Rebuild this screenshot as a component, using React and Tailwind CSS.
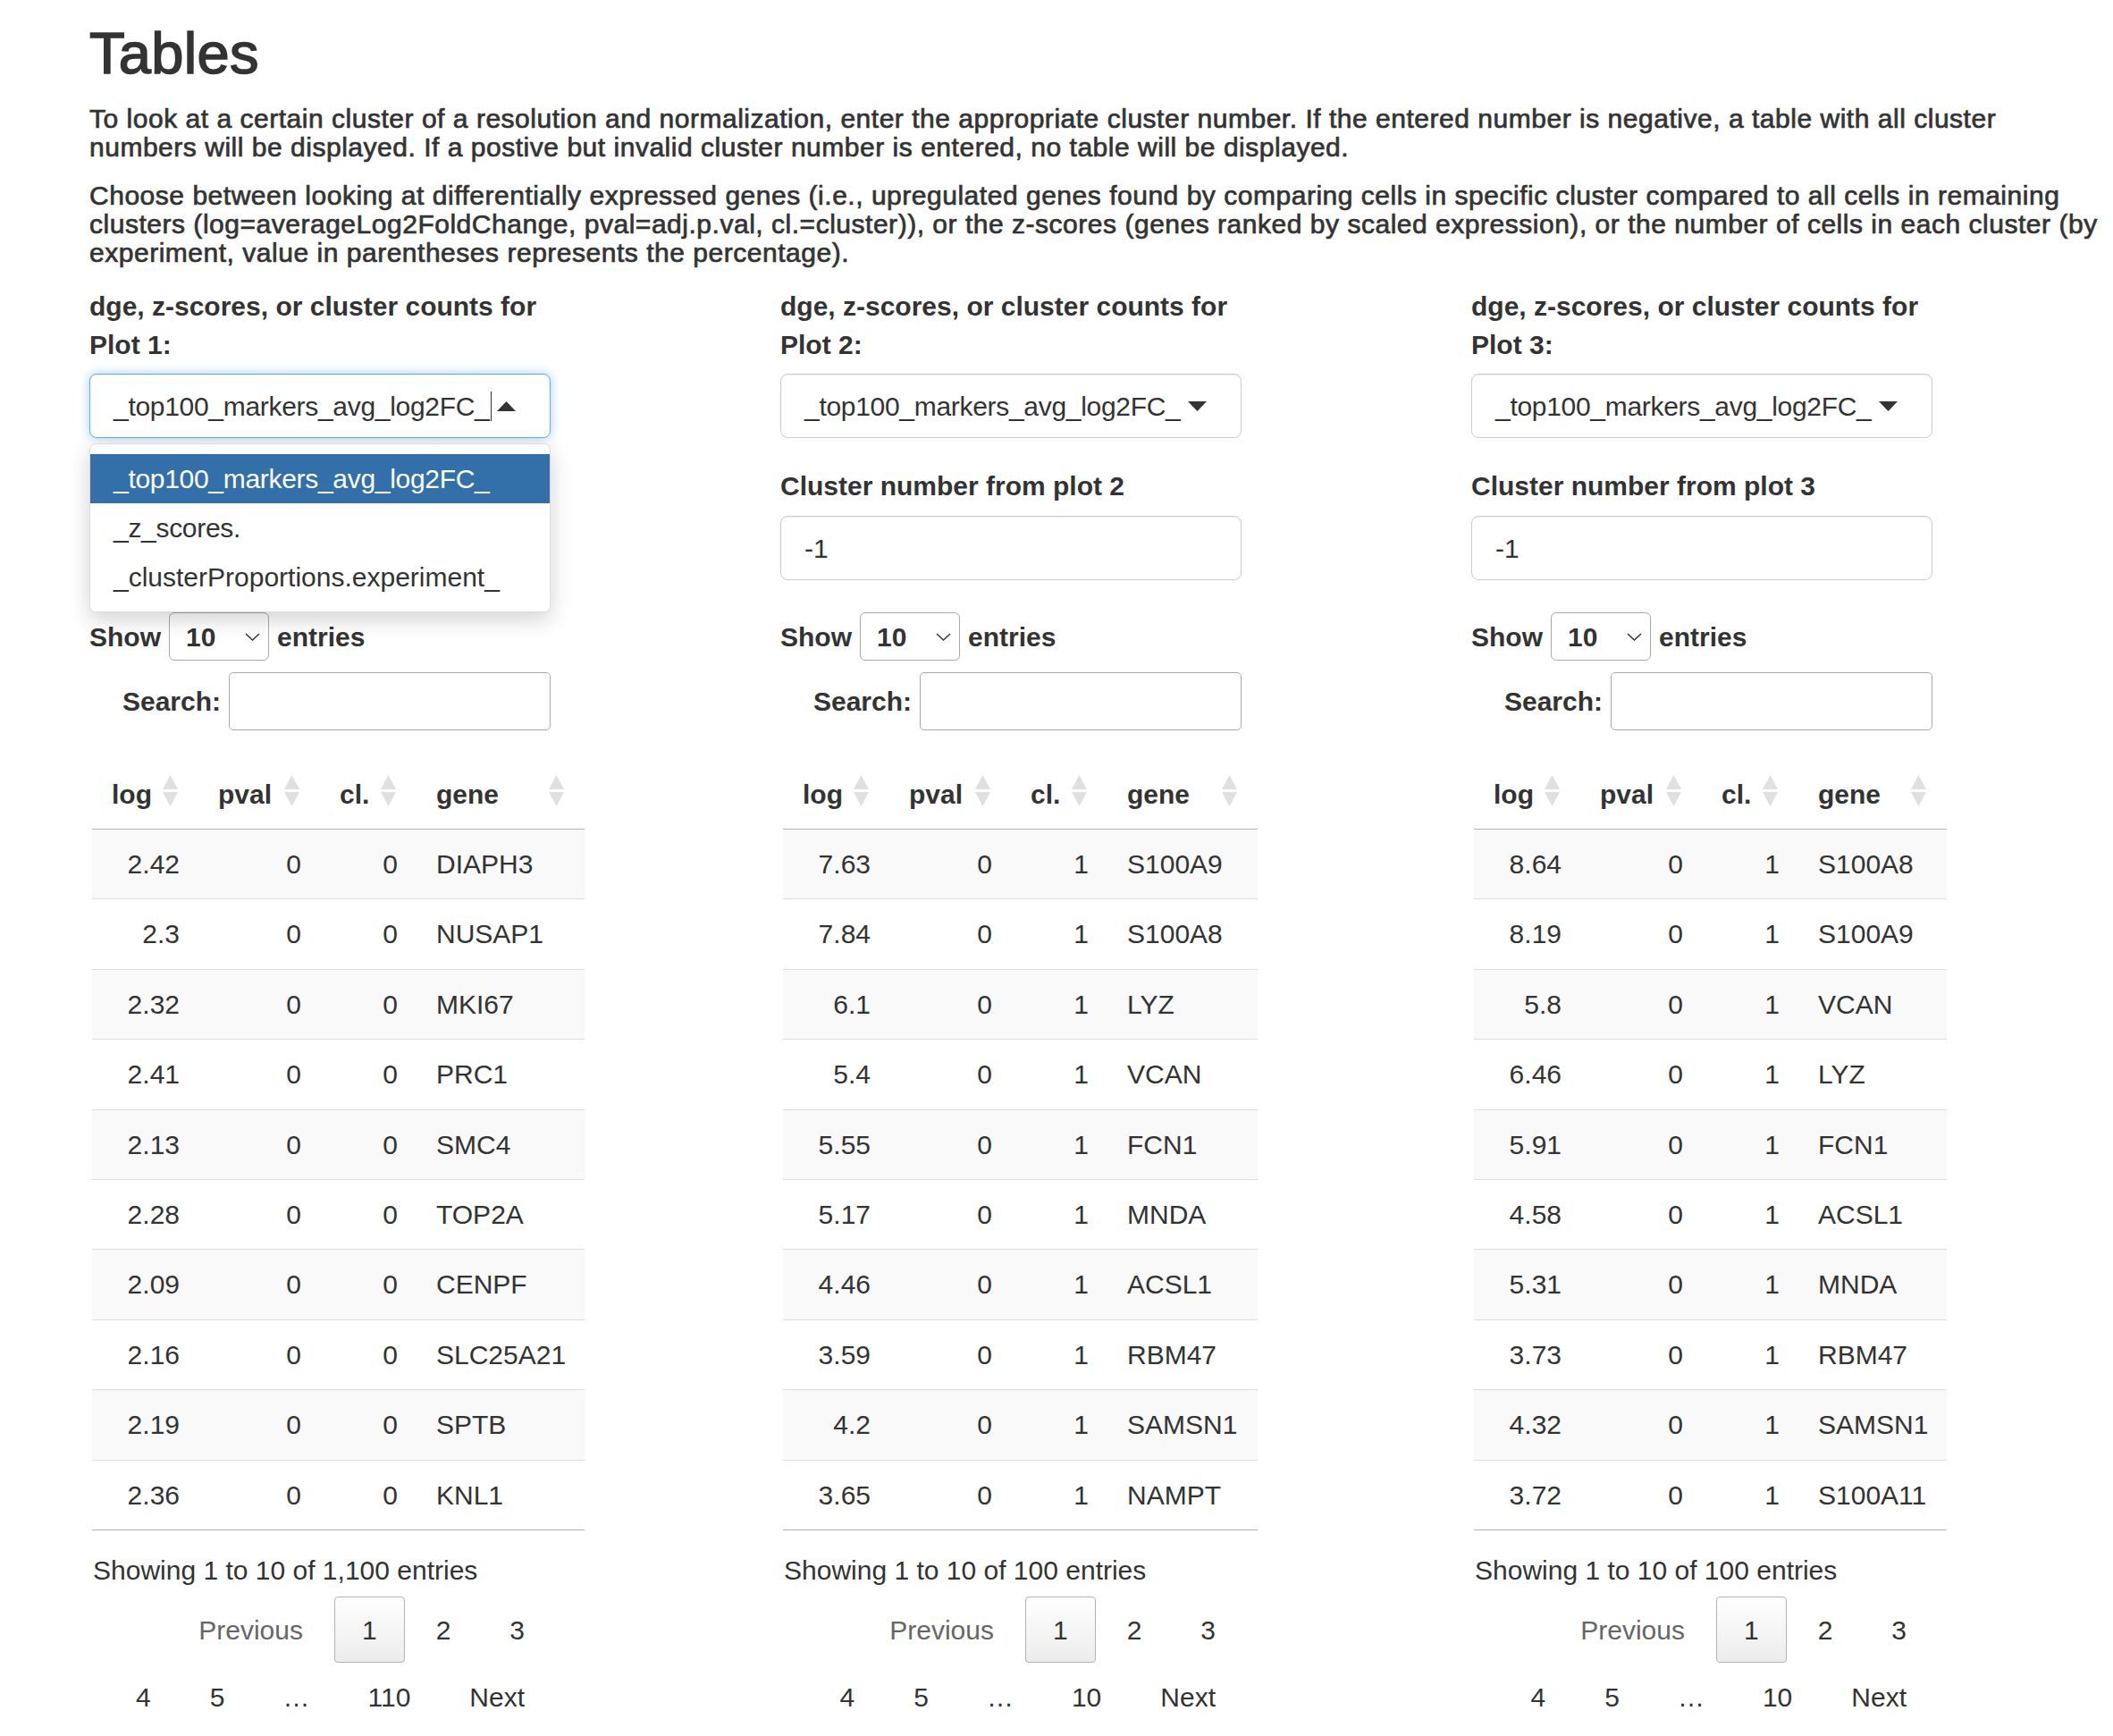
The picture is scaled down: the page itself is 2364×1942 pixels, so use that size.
import React from 'react';

const plots = [
  {
    n: 1,
    open: true,
    geneW: 188,
    total: '1,100',
    last: '110',
    rows: [
      ['2.42', '0', '0', 'DIAPH3'],
      ['2.3', '0', '0', 'NUSAP1'],
      ['2.32', '0', '0', 'MKI67'],
      ['2.41', '0', '0', 'PRC1'],
      ['2.13', '0', '0', 'SMC4'],
      ['2.28', '0', '0', 'TOP2A'],
      ['2.09', '0', '0', 'CENPF'],
      ['2.16', '0', '0', 'SLC25A21'],
      ['2.19', '0', '0', 'SPTB'],
      ['2.36', '0', '0', 'KNL1'],
    ],
  },
  {
    n: 2,
    open: false,
    geneW: 168,
    total: '100',
    last: '10',
    rows: [
      ['7.63', '0', '1', 'S100A9'],
      ['7.84', '0', '1', 'S100A8'],
      ['6.1', '0', '1', 'LYZ'],
      ['5.4', '0', '1', 'VCAN'],
      ['5.55', '0', '1', 'FCN1'],
      ['5.17', '0', '1', 'MNDA'],
      ['4.46', '0', '1', 'ACSL1'],
      ['3.59', '0', '1', 'RBM47'],
      ['4.2', '0', '1', 'SAMSN1'],
      ['3.65', '0', '1', 'NAMPT'],
    ],
  },
  {
    n: 3,
    open: false,
    geneW: 166,
    total: '100',
    last: '10',
    rows: [
      ['8.64', '0', '1', 'S100A8'],
      ['8.19', '0', '1', 'S100A9'],
      ['5.8', '0', '1', 'VCAN'],
      ['6.46', '0', '1', 'LYZ'],
      ['5.91', '0', '1', 'FCN1'],
      ['4.58', '0', '1', 'ACSL1'],
      ['5.31', '0', '1', 'MNDA'],
      ['3.73', '0', '1', 'RBM47'],
      ['4.32', '0', '1', 'SAMSN1'],
      ['3.72', '0', '1', 'S100A11'],
    ],
  },
];

const SortIcon = () => (
  <svg width="17" height="36" viewBox="0 0 17 36" className="absolute right-[23px] top-[24px]">
    <polygon points="0,16 8.5,0 17,16" fill="#e0e0e0" />
    <polygon points="0,19 17,19 8.5,35" fill="#e0e0e0" />
  </svg>
);

const Caret = ({ up }) => (
  <svg width="21" height="11" viewBox="0 0 21 11" className="absolute right-[38px] top-[30px]">
    {up ? <polygon points="0,11 10.5,0 21,11" fill="#333" /> : <polygon points="0,0 21,0 10.5,11" fill="#333" />}
  </svg>
);

const PageBtn = ({ label, current, disabled }) => (
  <span
    className={
      'ml-[4px] flex h-[74px] min-w-[45px] items-center justify-center rounded-[4px] border px-[30px] ' +
      (current
        ? 'border-[#b3b3b3] bg-gradient-to-b from-white to-[#ececec] text-[#333]'
        : 'border-transparent ' + (disabled ? 'text-[#666]' : 'text-[#333]'))
    }
  >
    {label}
  </span>
);

const PlotColumn = ({ plot }) => (
  <div className="w-[773px]">
    <div className="relative w-[516px]">
      <div className="mb-[11px] font-bold leading-[43px]">
        <div>dge, z-scores, or cluster counts for</div>
        <div>Plot {plot.n}:</div>
      </div>
      <div
        className={
          'relative flex h-[72px] items-center rounded-[8px] border bg-white pl-[26px] ' +
          (plot.open
            ? 'border-[#66afe9] shadow-[inset_0_1px_1px_rgba(0,0,0,0.075),0_0_12px_rgba(102,175,233,0.6)]'
            : 'border-[#ccc] shadow-[inset_0_1px_1px_rgba(0,0,0,0.075)]')
        }
      >
        <span className="whitespace-nowrap tracking-[-0.3px]">_top100_markers_avg_log2FC_</span>
        {plot.open && <span className="ml-[1px] inline-block h-[33px] w-[1.5px] bg-[#333]" />}
        <Caret up={plot.open} />
      </div>

      {plot.open && (
        <div className="absolute left-0 top-[175px] z-10 w-[516px] rounded-[7px] border border-[#dcdcdc] bg-white py-[11px] shadow-[0_8px_24px_rgba(0,0,0,0.18)]">
          <div className="flex h-[55px] items-center bg-[#3370aa] pl-[26px] tracking-[-0.3px] text-white">_top100_markers_avg_log2FC_</div>
          <div className="flex h-[55px] items-center pl-[26px] tracking-[-0.3px]">_z_scores.</div>
          <div className="flex h-[55px] items-center pl-[26px]">_clusterProportions.experiment_</div>
        </div>
      )}

      <div className="mt-[32px] mb-[12px] font-bold leading-[43px]">Cluster number from plot {plot.n}</div>
      <div className="flex h-[72px] items-center rounded-[8px] border border-[#ccc] bg-white pl-[26px] shadow-[inset_0_1px_1px_rgba(0,0,0,0.075)]">
        -1
      </div>

      <div className="mt-[36px] flex h-[54px] items-center font-bold">
        <span>Show</span>
        <span className="relative mx-[9px] flex h-[54px] w-[112px] items-center rounded-[6px] border border-[#aaa] pl-[18px]">
          10
          <svg width="17" height="9" viewBox="0 0 17 9" className="absolute right-[9px] top-[22px]">
            <polyline points="1,1 8.5,8 16,1" fill="none" stroke="#333" strokeWidth="1.4" />
          </svg>
        </span>
        <span>entries</span>
      </div>

      <div className="mt-[13px] flex h-[65px] items-center justify-end font-bold">
        <span className="mr-[9px]">Search:</span>
        <span className="h-[65px] w-[360px] rounded-[5px] border border-[#aaa] bg-white" />
      </div>
    </div>

    <table
      className="ml-[3px] mt-[26px] table-fixed border-separate border-spacing-0"
      style={{ width: 363 + plot.geneW }}
    >
      <colgroup>
        <col className="w-[119px]" />
        <col className="w-[136px]" />
        <col className="w-[108px]" />
        <col style={{ width: plot.geneW }} />
      </colgroup>
      <thead>
        <tr>
          {['log', 'pval', 'cl.', 'gene'].map((h) => (
            <th
              key={h}
              className="relative border-b border-[#b3b3b3] pb-[17px] pl-[22px] pt-[24px] text-left font-bold leading-[43px]"
            >
              {h}
              <SortIcon />
            </th>
          ))}
        </tr>
      </thead>
      <tbody>
        {plot.rows.map((r, i) => {
          const b = i === plot.rows.length - 1 ? 'border-b border-[#b3b3b3]' : 'border-b border-[#dddddd]';
          const bg = i % 2 === 0 ? 'bg-[#f9f9f9]' : 'bg-white';
          return (
            <tr key={i} className={bg}>
              <td className={'py-[17px] pr-[21px] text-right leading-[43.4px] ' + b}>{r[0]}</td>
              <td className={'py-[17px] pr-[21px] text-right leading-[43.4px] ' + b}>{r[1]}</td>
              <td className={'py-[17px] pr-[21px] text-right leading-[43.4px] ' + b}>{r[2]}</td>
              <td className={'whitespace-nowrap py-[17px] pl-[22px] text-left leading-[43.4px] ' + b}>{r[3]}</td>
            </tr>
          );
        })}
      </tbody>
    </table>

    <div className="ml-[4px] mt-[23px] leading-[43px]">Showing 1 to 10 of {plot.total} entries</div>

    <div className="mt-[8px] w-[518px]">
      <div className="flex justify-end">
        <PageBtn label="Previous" disabled />
        <PageBtn label="1" current />
        <PageBtn label="2" />
        <PageBtn label="3" />
      </div>
      <div className="mt-[1px] flex justify-end">
        <PageBtn label="4" />
        <PageBtn label="5" />
        <span className="ml-[4px] flex h-[74px] items-center px-[30px]">…</span>
        <PageBtn label={plot.last} />
        <PageBtn label="Next" />
      </div>
    </div>
  </div>
);

export default function App() {
  return (
    <div className="min-h-[1942px] w-[2364px] overflow-hidden bg-white pl-[100px] font-['Liberation_Sans',Arial,Helvetica,sans-serif] text-[30px] text-[#333]">
      <h2 className="pt-[25px] text-[65px] leading-[70px] tracking-[0.3px] [-webkit-text-stroke:1.6px_#333]">Tables</h2>

      <p className="mt-[22px] whitespace-nowrap leading-[32px] tracking-[0.52px] [-webkit-text-stroke:0.7px_#333]">
        To look at a certain cluster of a resolution and normalization, enter the appropriate cluster number. If the entered number is negative, a table with all cluster
        <br />
        numbers will be displayed. If a postive but invalid cluster number is entered, no table will be displayed.
      </p>

      <p className="mt-[22px] whitespace-nowrap leading-[32px] tracking-[0.52px] [-webkit-text-stroke:0.7px_#333]">
        Choose between looking at differentially expressed genes (i.e., upregulated genes found by comparing cells in specific cluster compared to all cells in remaining
        <br />
        clusters (log=averageLog2FoldChange, pval=adj.p.val, cl.=cluster)), or the z-scores (genes ranked by scaled expression), or the number of cells in each cluster (by
        <br />
        experiment, value in parentheses represents the percentage).
      </p>

      <div className="mt-[22px] grid grid-cols-[773px_773px_773px]">
        {plots.map((p) => (
          <PlotColumn key={p.n} plot={p} />
        ))}
      </div>
    </div>
  );
}
